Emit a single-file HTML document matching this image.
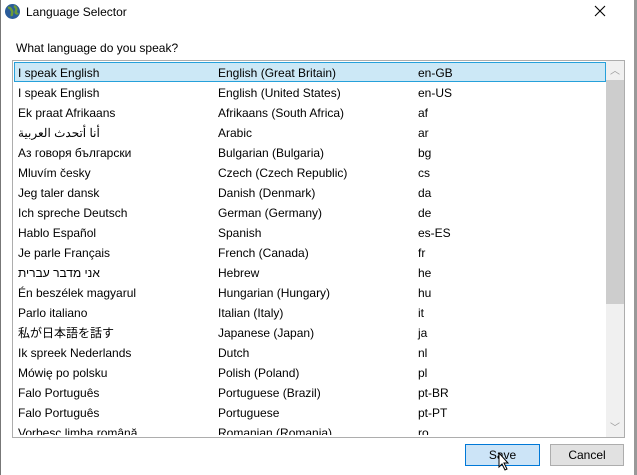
<!DOCTYPE html><html><head><style>
body{margin:0;width:637px;height:475px;background:#fff;font-family:"Liberation Sans","Noto Sans CJK JP",sans-serif;font-size:12px;color:#000;position:relative;overflow:hidden}
.abs{position:absolute}
.row{position:absolute;left:14px;width:590px;height:20px;line-height:19px}
.row span{position:absolute}
.c1{left:4px}.c2{left:204px}.c3{left:404px}
</style></head><body>
<div class="abs" style="left:0;top:0;width:1px;height:475px;background:#777"></div>
<div class="abs" style="left:634px;top:0;width:3px;height:475px;background:#999"></div>
<svg class="abs" style="left:4px;top:3px" width="17" height="17"><circle cx="8.5" cy="8.5" r="7.5" fill="#2a5c9a"/><path d="M4 5c2-1 3 1 4 3s-1 3 0 5M10 3c2 1 3 3 2 5s1 3 2 2" stroke="#6a9a3a" stroke-width="2.5" fill="none"/></svg>
<div class="abs" style="left:26px;top:5px;font-size:12px">Language Selector</div>
<svg class="abs" style="left:594px;top:5px" width="12" height="12"><path d="M1 1L11 11M11 1L1 11" stroke="#000" stroke-width="1.1"/></svg>
<div class="abs" style="left:16px;top:41px">What language do you speak?</div>
<div class="abs" style="left:12px;top:60px;width:611px;height:376px;border:1px solid #adadad;overflow:hidden">
<div class="abs" style="left:1px;top:1px;width:590px;height:18px;background:#cce8f6;border:1px solid #26a0da"></div>
<div class="abs" style="left:593px;top:0;width:18px;height:376px;background:#f0f0f0"></div>
<div class="abs" style="left:593px;top:19px;width:18px;height:224px;background:#cdcdcd"></div>
<div class="abs" style="left:597px;top:1px;color:#999;font-size:10px">︿</div>
<div class="abs" style="left:597px;top:358px;color:#999;font-size:10px">﹀</div>
</div>
<div class="abs" style="left:0;top:63px">
<div class="row" style="top:1px"><span class="c1">I speak English</span><span class="c2">English (Great Britain)</span><span class="c3">en-GB</span></div>
<div class="row" style="top:21px"><span class="c1">I speak English</span><span class="c2">English (United States)</span><span class="c3">en-US</span></div>
<div class="row" style="top:41px"><span class="c1">Ek praat Afrikaans</span><span class="c2">Afrikaans (South Africa)</span><span class="c3">af</span></div>
<div class="row" style="top:61px"><span class="c1">أنا أتحدث العربية</span><span class="c2">Arabic</span><span class="c3">ar</span></div>
<div class="row" style="top:81px"><span class="c1">Аз говоря български</span><span class="c2">Bulgarian (Bulgaria)</span><span class="c3">bg</span></div>
<div class="row" style="top:101px"><span class="c1">Mluvím česky</span><span class="c2">Czech (Czech Republic)</span><span class="c3">cs</span></div>
<div class="row" style="top:121px"><span class="c1">Jeg taler dansk</span><span class="c2">Danish (Denmark)</span><span class="c3">da</span></div>
<div class="row" style="top:141px"><span class="c1">Ich spreche Deutsch</span><span class="c2">German (Germany)</span><span class="c3">de</span></div>
<div class="row" style="top:161px"><span class="c1">Hablo Español</span><span class="c2">Spanish</span><span class="c3">es-ES</span></div>
<div class="row" style="top:181px"><span class="c1">Je parle Français</span><span class="c2">French (Canada)</span><span class="c3">fr</span></div>
<div class="row" style="top:201px"><span class="c1">אני מדבר עברית</span><span class="c2">Hebrew</span><span class="c3">he</span></div>
<div class="row" style="top:221px"><span class="c1">Én beszélek magyarul</span><span class="c2">Hungarian (Hungary)</span><span class="c3">hu</span></div>
<div class="row" style="top:241px"><span class="c1">Parlo italiano</span><span class="c2">Italian (Italy)</span><span class="c3">it</span></div>
<div class="row" style="top:261px"><span class="c1">私が日本語を話す</span><span class="c2">Japanese (Japan)</span><span class="c3">ja</span></div>
<div class="row" style="top:281px"><span class="c1">Ik spreek Nederlands</span><span class="c2">Dutch</span><span class="c3">nl</span></div>
<div class="row" style="top:301px"><span class="c1">Mówię po polsku</span><span class="c2">Polish (Poland)</span><span class="c3">pl</span></div>
<div class="row" style="top:321px"><span class="c1">Falo Português</span><span class="c2">Portuguese (Brazil)</span><span class="c3">pt-BR</span></div>
<div class="row" style="top:341px"><span class="c1">Falo Português</span><span class="c2">Portuguese</span><span class="c3">pt-PT</span></div>
<div class="row" style="top:361px;height:11px;overflow:hidden"><span class="c1">Vorbesc limba română</span><span class="c2">Romanian (Romania)</span><span class="c3">ro</span></div>
</div>
<div class="abs" style="left:465px;top:444px;width:73px;height:20px;background:#cce4f7;border:1px solid #0078d7;text-align:center;line-height:20px">Save</div>
<div class="abs" style="left:550px;top:444px;width:72px;height:20px;background:#e1e1e1;border:1px solid #adadad;text-align:center;line-height:20px">Cancel</div>
<svg class="abs" style="left:498px;top:452px" width="14" height="20"><path d="M1 1v14l3-3 3 6 2-1-3-6h4z" fill="#fff" stroke="#000"/></svg>
</body></html>
